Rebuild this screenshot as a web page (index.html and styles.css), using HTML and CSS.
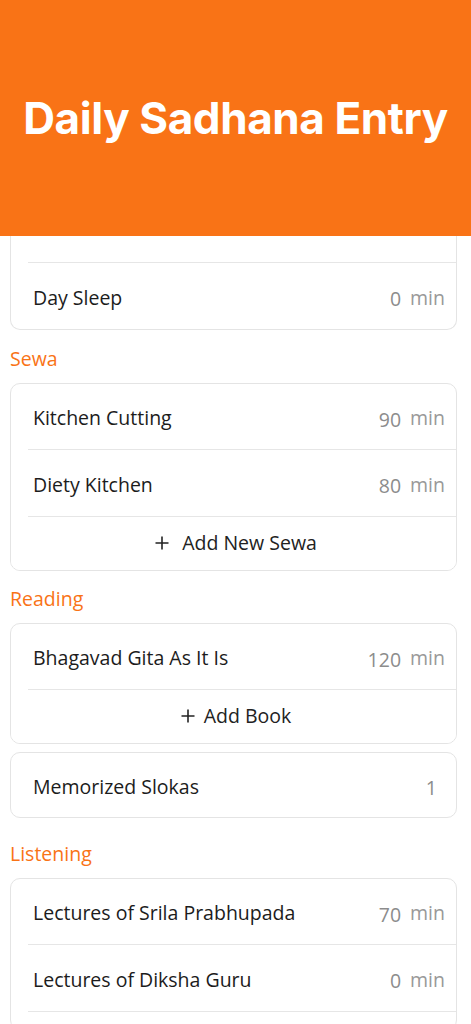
FILE: index.html
```html
<!DOCTYPE html>
<html lang="en">

<head>
  <meta charset="UTF-8">
  <meta name="viewport" content="width=device-width, initial-scale=1.0">
  <title>Daily Sadhana Entry</title>
  <link rel="stylesheet" href="styles.css">
</head>

<body>
  <header class="top-bar">
    <h1>Daily Sadhana Entry</h1>
  </header>

  <main class="entry">
    <!-- Sleep (scrolled, top hidden under header) -->
    <section class="card card-cut">
      <div class="row row-cut"></div>
      <div class="row row-last">
        <span class="label">Day Sleep</span>
        <span class="value"><span class="num">0</span><span class="unit">min</span></span>
      </div>
    </section>

    <h2 class="section-title">Sewa</h2>
    <section class="card">
      <div class="row">
        <span class="label">Kitchen Cutting</span>
        <span class="value"><span class="num">90</span><span class="unit">min</span></span>
      </div>
      <div class="row">
        <span class="label">Diety Kitchen</span>
        <span class="value"><span class="num">80</span><span class="unit">min</span></span>
      </div>
      <button class="add-row" type="button">
        <svg width="16" height="16" viewBox="0 0 16 16"><path d="M8 1.5v13M1.5 8h13" stroke="#222" stroke-width="1.6" fill="none"/></svg>
        Add New Sewa
      </button>
    </section>

    <h2 class="section-title title-tight">Reading</h2>
    <section class="card">
      <div class="row">
        <span class="label">Bhagavad Gita As It Is</span>
        <span class="value"><span class="num">120</span><span class="unit">min</span></span>
      </div>
      <button class="add-row add-tight" type="button">
        <svg width="16" height="16" viewBox="0 0 16 16"><path d="M8 1.5v13M1.5 8h13" stroke="#222" stroke-width="1.6" fill="none"/></svg>
        Add Book
      </button>
    </section>
    <section class="card card-spaced">
      <div class="row row-last row-short">
        <span class="label">Memorized Slokas</span>
        <span class="value count"><span class="num">1</span></span>
      </div>
    </section>

    <h2 class="section-title">Listening</h2>
    <section class="card card-end">
      <div class="row">
        <span class="label">Lectures of Srila Prabhupada</span>
        <span class="value"><span class="num">70</span><span class="unit">min</span></span>
      </div>
      <div class="row">
        <span class="label">Lectures of Diksha Guru</span>
        <span class="value"><span class="num">0</span><span class="unit">min</span></span>
      </div>
    </section>
  </main>
</body>

</html>
```

FILE: styles.css
```css
body {
  margin: 0;
  padding: 0;
  font-family: 'Open Sans', 'Noto Sans', sans-serif;
  background: #fff;
  color: #1c1c1c;
  height: 1024px;
  overflow: hidden;
}

.top-bar {
  height: 236px;
  background: #f97316;
  display: flex;
  align-items: center;
  justify-content: center;
}

.top-bar h1 {
  margin: 0;
  font-family: 'Inter', sans-serif;
  font-weight: 700;
  font-size: 44px;
  color: #fff;
  letter-spacing: -0.4px;
}

.entry {
  padding: 0 14px 0 10px;
}

.card {
  border: 1px solid #e4e4e4;
  border-radius: 10px;
  margin-bottom: 8px;
  background: #fff;
  overflow: hidden;
}

.card-cut {
  border-top: none;
  border-radius: 0 0 10px 10px;
}

.card-spaced {
  margin-bottom: 24px;
}

/* last card continues below the fold */
.card-end {
  height: 150px;
}

.row {
  margin-left: 17px;
  padding: 2px 11px 0 5px;
  box-sizing: border-box;
  height: 66px;
  border-bottom: 1px solid #e6e6e6;
  display: flex;
  align-items: center;
  justify-content: space-between;
}

.row + .row {
  height: 67px;
}

.row-cut {
  height: 27px;
}

.row-last,
.row + .row-last {
  height: 66px;
  border-bottom: none;
}

.row-short {
  height: 64px;
}

.label {
  font-size: 19.5px;
  color: #1c1c1c;
}

.value {
  display: flex;
  align-items: center;
  gap: 9px;
}

.num {
  font-size: 19.5px;
  color: #8c8c8c;
  padding-top: 3px;
}

.unit {
  font-size: 19.5px;
  color: #999;
}

.count {
  margin-right: 8px;
}

.section-title {
  margin: 17px 0 12px;
  font-size: 19.5px;
  line-height: 24px;
  font-weight: 500;
  color: #f97316;
}

.title-tight {
  margin-top: 16px;
}

.add-row {
  width: 100%;
  height: 53px;
  border: none;
  background: #fff;
  display: flex;
  align-items: center;
  justify-content: center;
  gap: 12px;
  font-family: inherit;
  font-size: 19.5px;
  color: #222;
  cursor: pointer;
  padding: 0 0 2px 4px;
}

.add-tight {
  gap: 8px;
}
```
